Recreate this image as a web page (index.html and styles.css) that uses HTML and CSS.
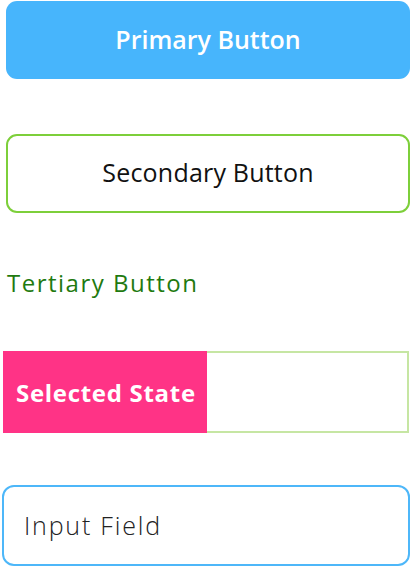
FILE: index.html
```html
<!DOCTYPE html>
<html lang="en">
<head>
<meta charset="utf-8">
<link rel="stylesheet" href="styles.css">
</head>
<body>
<div class="page">
  <button class="btn btn-primary">Primary Button</button>
  <button class="btn btn-secondary">Secondary Button</button>
  <button class="btn-tertiary">Tertiary Button</button>
  <div class="selected">
    <div class="selected-label">Selected State</div>
    <div class="selected-rest"></div>
  </div>
  <div class="input-field">Input Field</div>
</div>
</body>
</html>
```
FILE: styles.css
```css
* { box-sizing: border-box; }
html, body { margin: 0; padding: 0; background: #ffffff; }
body { width: 411px; height: 567px; overflow: hidden; font-family: "Open Sans", "Noto Sans", sans-serif; }
.page { display: flex; flex-direction: column; padding-top: 1px; }
.btn {
  display: flex; align-items: center; justify-content: center;
  font-family: inherit; font-size: 25px; cursor: pointer; padding: 0;
  margin: 0 1px 0 6px; border-radius: 11px;
}
.btn-primary {
  height: 78px; background: #47b5fc; border: none; color: #ffffff; font-weight: 600;
  padding-bottom: 2px;
}
.btn-secondary {
  margin-top: 55px; height: 79px; background: #fff; border: 2px solid #7dcf3a; color: #111; font-weight: 400;
  letter-spacing: 0.2px; padding-bottom: 3px;
}
.btn-tertiary {
  align-self: flex-start; margin: 56px 0 0 7px; padding: 0; border: none; background: none;
  font-family: inherit; font-size: 24px; font-weight: 500; color: #1f7a10; line-height: 28px;
  letter-spacing: 1.5px;
}
.selected {
  display: flex; margin: 54px 2px 0 3px; height: 82px;
}
.selected-label {
  width: 204px; background: #ff3386; color: #fff; font-weight: 700; font-size: 24px;
  display: flex; align-items: center; padding-left: 13px; letter-spacing: 0.7px;
}
.selected-rest { flex: 1; border: 2px solid #c6e6a3; border-left: none; }
.input-field {
  margin: 52px 1px 0 2px; height: 81px; border: 2px solid #4db7f9; border-radius: 12px;
  display: flex; align-items: center; padding-left: 20px; padding-bottom: 2px;
  font-size: 25px; font-weight: 300; color: #222; letter-spacing: 1.8px;
}
```
